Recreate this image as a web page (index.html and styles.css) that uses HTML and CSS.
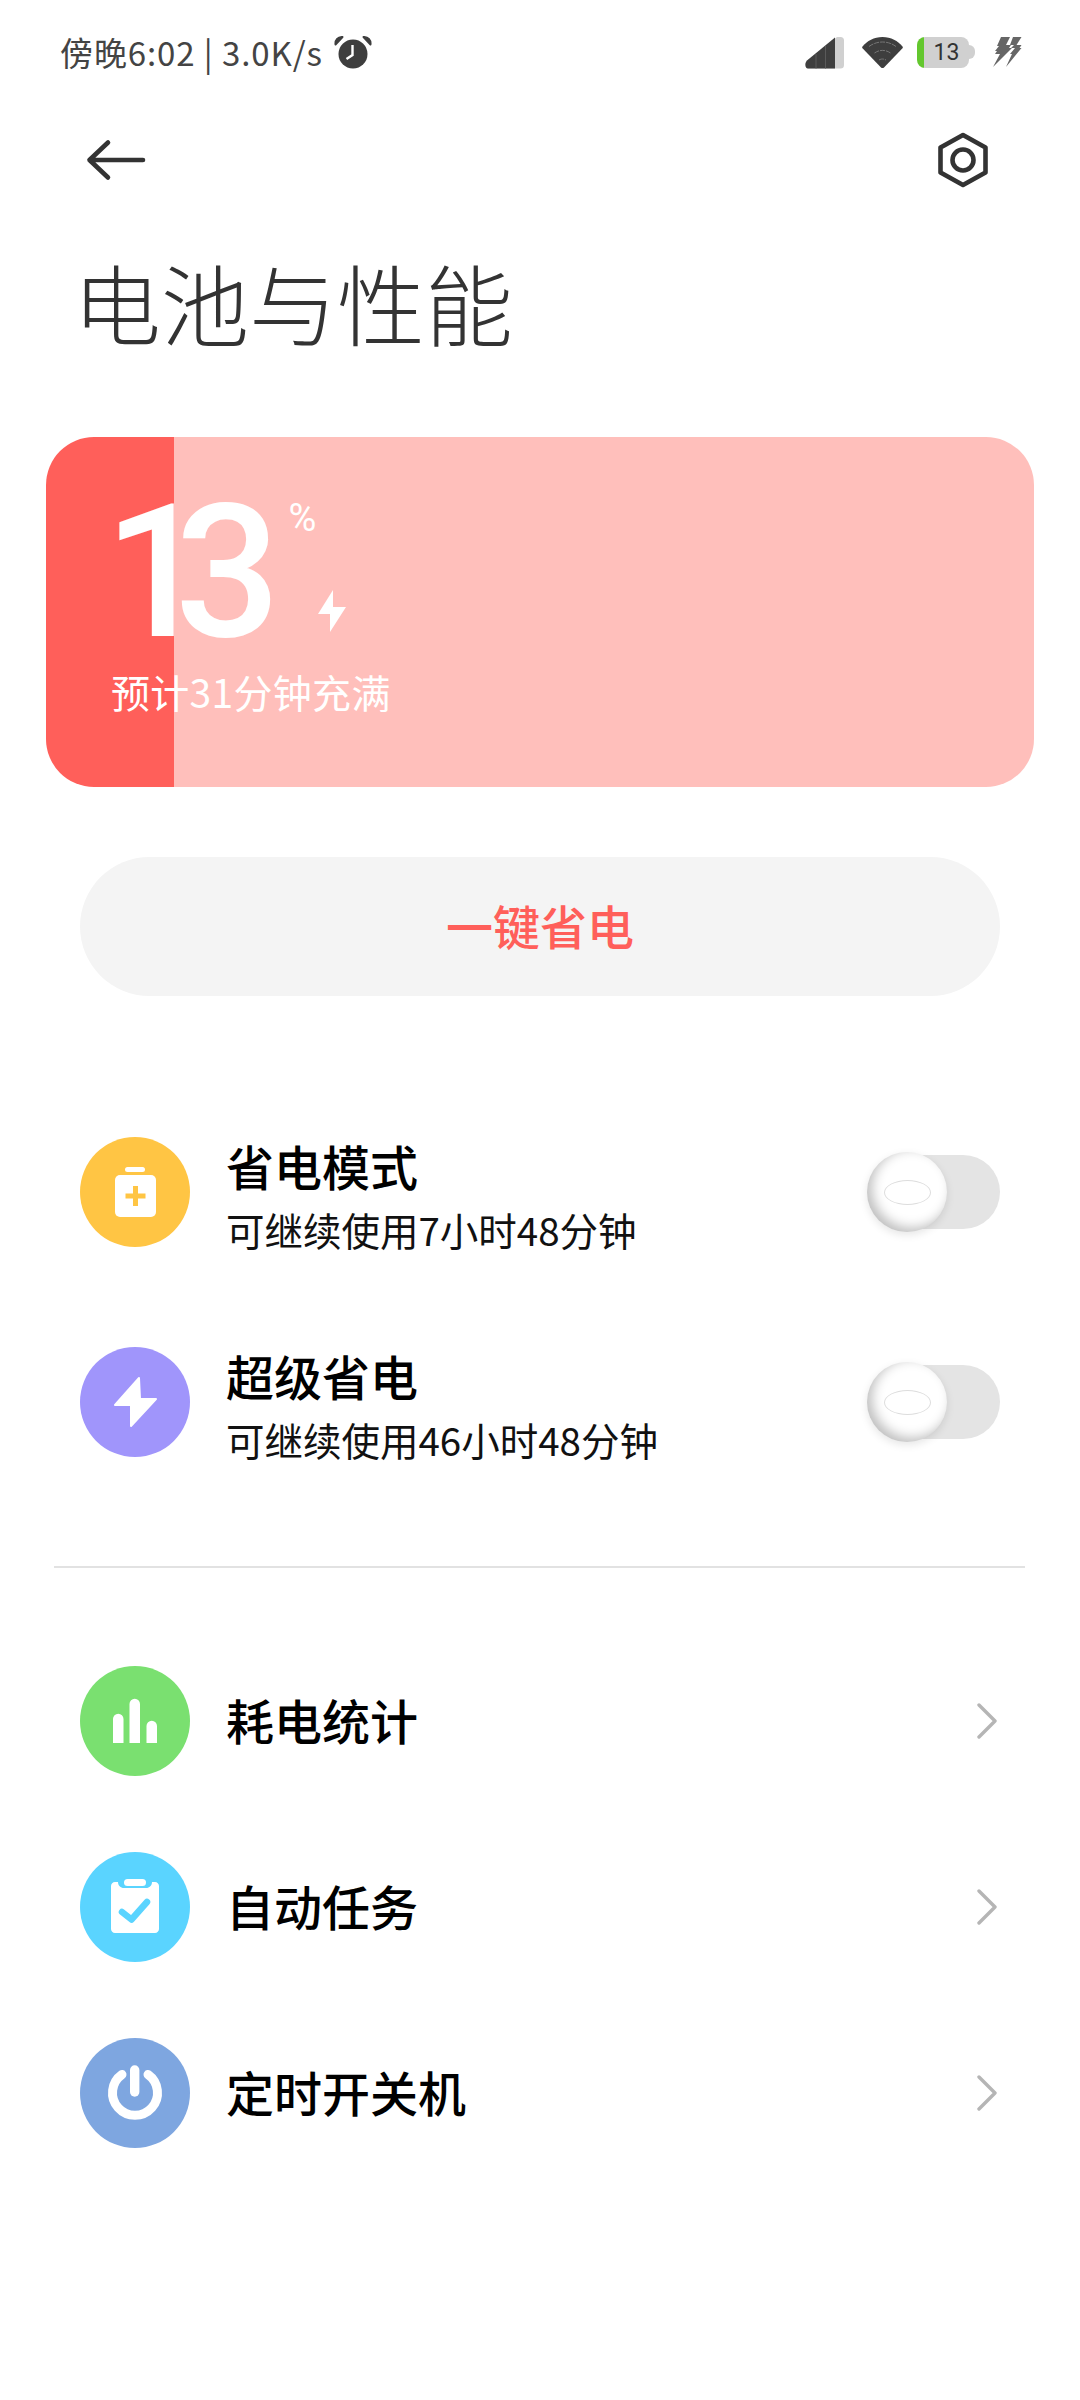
FILE: index.html
```html
<!DOCTYPE html>
<html lang="zh-CN">
<head>
    <meta charset="UTF-8">
    <meta name="viewport" content="width=device-width, initial-scale=1.0">
    <title>电池与性能</title>
    <link rel="stylesheet" href="styles.css">
</head>
<body>
    <div class="wrapper">
        <!-- 状态栏 -->
        <div class="status-bar">
            <span class="status-text">傍晚6:02 | 3.0K/s</span>
            <svg class="alarm" width="38" height="33" viewBox="0 0 38 33">
                <circle cx="19" cy="18" r="14.5" fill="#3e3e3e"/>
                <path d="M18.5 9v10l-6 4" fill="none" stroke="#fff" stroke-width="2.4"/>
                <path d="M1.5 8.5C1 4 4 .8 8.5 1L1.5 8.5zM36.5 8.5C37 4 34 .8 29.5 1l7 7.5z" fill="#3e3e3e" stroke="#3e3e3e" stroke-width="2" stroke-linejoin="round"/>
            </svg>
            <div class="status-icons">
                <svg width="40" height="33" viewBox="0 0 40 33">
                    <path d="M3 32.500h32.500a3.500 3.500 0 0 0 3.500-3.500V4.500A3.500 3.500 0 0 0 35.500 1H32L2 24.500c-2.500 2.500-2 8 1 8z" fill="#d0d0d0"/>
                    <path d="M3 32.500h27V1.500L2 24.500c-2.500 2.500-2 8 1 8z" fill="#3e3e3e"/>
                    <path d="M11 18v14.500M20.500 10v22.500" stroke="#5a5a5a" stroke-width="1"/>
                </svg>
                <svg class="wifi" width="43" height="33" viewBox="0 0 43 33">
                    <path d="M1.500 10.500C6 5 13 1 21.500 1S37 5 41.500 10.500c.5.700.4 1.300 0 1.800L23 31.500c-.8.800-2.200.8-3 0L1.500 12.300c-.4-.5-.5-1.100 0-1.800z" fill="#3e3e3e"/>
                    <path d="M8 10.500c8-6 19-6 27 0M13.500 17c5-3.500 11-3.500 16 0M18 24c2-1.300 5-1.300 7 0" fill="none" stroke="#777" stroke-width="1" stroke-dasharray="5 1"/>
                </svg>
                <div class="battery">
                    <div class="battery-body">13</div>
                    <div class="battery-nub"></div>
                </div>
                <svg class="flash" width="30" height="32" viewBox="0 0 30 32">
                    <path d="M9 1h9l-4 8h5l-2 3h3L1 31l7-13H3l2-3H3l4-5H5zM21 1h8.500l-5 8h5l-2 3h2L14 31l6-13h-2l5-6h-4l3-3h-4z" fill="#666"/>
                </svg>
            </div>
        </div>

        <!-- 顶部按钮 -->
        <div class="toolbar">
            <svg width="60" height="42" viewBox="0 0 60 42">
                <path d="M22 3.500L3.500 21 22 38.500M3.500 21H57" fill="none" stroke="#333" stroke-width="4.600" stroke-linecap="round" stroke-linejoin="round"/>
            </svg>
            <svg width="52" height="56" viewBox="0 0 52 56">
                <path d="M26 3l22.500 12.500v25L26 53 3.500 40.500v-25z" fill="none" stroke="#333" stroke-width="4.600" stroke-linejoin="round"/>
                <circle cx="26" cy="28" r="10.500" fill="none" stroke="#333" stroke-width="4.600"/>
            </svg>
        </div>

        <h1 class="title">电池与性能</h1>

        <!-- 电量卡片 -->
        <div class="card">
            <div class="level">
                <span class="level-num">13</span>
                <div class="level-side">
                    <span class="level-unit">%</span>
                    <svg width="28" height="42" viewBox="0 0 28 42">
                        <path d="M15 0L0 24h12v18l16-25H15z" fill="#fff"/>
                    </svg>
                </div>
            </div>
            <div class="card-sub">预计31分钟充满</div>
        </div>

        <div class="save-btn">一键省电</div>

        <!-- 省电模式 -->
        <div class="mode-list">
            <div class="row">
                <svg class="row-icon" width="110" height="110" viewBox="0 0 110 110">
                    <circle cx="55" cy="55" r="55" fill="#ffc544"/>
                    <rect x="45" y="30" width="20" height="5" rx="2.500" fill="#fff"/>
                    <rect x="35" y="38" width="41" height="42" rx="5" fill="#fff"/>
                    <path d="M55.500 49v20M45.500 59h20" stroke="#ffc544" stroke-width="5"/>
                </svg>
                <div class="row-text">
                    <div class="row-title">省电模式</div>
                    <div class="row-sub">可继续使用7小时48分钟</div>
                </div>
                <div class="toggle">
                    <div class="knob"><div class="knob-mark"></div></div>
                </div>
            </div>
            <div class="row">
                <svg class="row-icon" width="110" height="110" viewBox="0 0 110 110">
                    <circle cx="55" cy="55" r="55" fill="#a095fb"/>
                    <path d="M59 31L35 58h16v21l25-27H60z" fill="#fff" stroke="#fff" stroke-width="2" stroke-linejoin="round"/>
                </svg>
                <div class="row-text">
                    <div class="row-title">超级省电</div>
                    <div class="row-sub">可继续使用46小时48分钟</div>
                </div>
                <div class="toggle">
                    <div class="knob"><div class="knob-mark"></div></div>
                </div>
            </div>
        </div>

        <div class="divider"></div>

        <!-- 其他入口 -->
        <div class="nav-list">
            <div class="row">
                <svg class="row-icon" width="110" height="110" viewBox="0 0 110 110">
                    <circle cx="55" cy="55" r="55" fill="#7ae070"/>
                    <path d="M33 77V53a5 5 0 0 1 10.500 0v24zM49.500 77V38a5.200 5.200 0 0 1 10.500 0v39zM66.500 77V60a5 5 0 0 1 10.500 0v17z" fill="#fff"/>
                </svg>
                <div class="row-title row-grow">耗电统计</div>
                <svg width="20" height="36" viewBox="0 0 20 36">
                    <path d="M2 2l16 16L2 34" fill="none" stroke="#b5b5b5" stroke-width="3.400" stroke-linecap="round" stroke-linejoin="round"/>
                </svg>
            </div>
            <div class="row">
                <svg class="row-icon" width="110" height="110" viewBox="0 0 110 110">
                    <circle cx="55" cy="55" r="55" fill="#5ad4ff"/>
                    <path d="M35 30h3c0 3.500 2.500 6 6 6h22c3.500 0 6-2.500 6-6h3c2.200 0 4 1.800 4 4v43c0 2.200-1.800 4-4 4H35c-2.200 0-4-1.800-4-4V34c0-2.200 1.800-4 4-4z" fill="#fff"/>
                    <rect x="44" y="27" width="22" height="7" rx="3.500" fill="#fff"/>
                    <path d="M42 60l9.500 7.500L67 50" fill="none" stroke="#5ad4ff" stroke-width="6.500" stroke-linecap="round" stroke-linejoin="round"/>
                </svg>
                <div class="row-title row-grow">自动任务</div>
                <svg width="20" height="36" viewBox="0 0 20 36">
                    <path d="M2 2l16 16L2 34" fill="none" stroke="#b5b5b5" stroke-width="3.400" stroke-linecap="round" stroke-linejoin="round"/>
                </svg>
            </div>
            <div class="row">
                <svg class="row-icon" width="110" height="110" viewBox="0 0 110 110">
                    <circle cx="55" cy="55" r="55" fill="#7ea6e0"/>
                    <path d="M42 36.500a22.500 22.500 0 1 0 26 0" fill="none" stroke="#fff" stroke-width="9" stroke-linecap="round"/>
                    <path d="M54.700 32v22" stroke="#fff" stroke-width="9.400" stroke-linecap="round"/>
                </svg>
                <div class="row-title row-grow">定时开关机</div>
                <svg width="20" height="36" viewBox="0 0 20 36">
                    <path d="M2 2l16 16L2 34" fill="none" stroke="#b5b5b5" stroke-width="3.400" stroke-linecap="round" stroke-linejoin="round"/>
                </svg>
            </div>
        </div>
    </div>
</body>
</html>
```

FILE: styles.css
```css
*{
 box-sizing: border-box;
}
body{
 margin: 0;
 background-color: #fff;
 font-family: "Noto Sans CJK SC", "Noto Sans", sans-serif;
}
.wrapper{
 width: 1080px;
 height: 2400px;
 overflow: hidden;
}
.status-bar{
 height: 104px;
 padding: 0 58px 0 60px;
 display: flex;
 align-items: center;
}
.status-text{
 font-size: 33px;
 letter-spacing: 0.9px;
 color: #444;
 white-space: nowrap;
}
.alarm{
 margin-left: 11px;
}
.status-icons{
 margin-left: auto;
 display: flex;
 align-items: center;
}
.wifi{
 margin-left: 16px;
}
.battery{
 margin-left: 13px;
 display: flex;
 align-items: center;
}
.battery-body{
 width: 52px;
 height: 31px;
 border-radius: 8px;
 background: linear-gradient(to right, #63c72e 7px, #d0d0d0 7px);
 padding-left: 7px;
 color: #333;
 font-family: Roboto, sans-serif;
 font-size: 23px;
 line-height: 31px;
 text-align: center;
}
.battery-nub{
 width: 6px;
 height: 14px;
 border-radius: 0 6px 6px 0;
 background-color: #d0d0d0;
}
.flash{
 margin-left: 17px;
}
.toolbar{
 height: 112px;
 padding: 0 91px 0 86px;
 display: flex;
 align-items: center;
 justify-content: space-between;
}
.title{
 margin: 25px 0 0 73px;
 height: 127px;
 font-size: 88px;
 line-height: 120px;
 font-weight: 300;
 color: #333;
}
.card{
 margin: 69px 46px 0;
 height: 350px;
 border-radius: 48px;
 padding: 42px 0 0 58px;
 background: linear-gradient(to right, #ff5f5a 128px, #ffbfbb 128px);
 color: #fff;
}
.level{
 display: flex;
 height: 186px;
}
.level-num{
 font-family: Roboto, sans-serif;
 font-size: 186px;
 line-height: 186px;
 font-weight: 500;
 letter-spacing: -35px;
}
.level-side{
 margin-left: 43px;
 display: flex;
 flex-direction: column;
 align-items: flex-start;
}
.level-unit{
 font-family: Roboto, sans-serif;
 font-size: 38px;
 line-height: 40px;
 margin-top: 19px;
}
.level-side svg{
 margin: 52px 0 0 30px;
}
.card-sub{
 margin-left: 7px;
 font-size: 39px;
 letter-spacing: 0.3px;
 line-height: 52px;
}
.save-btn{
 margin: 70px 80px 0;
 height: 139px;
 padding-bottom: 5px;
 border-radius: 70px;
 background-color: #f4f4f4;
 color: #ff5f5a;
 font-size: 47px;
 font-weight: 500;
 display: flex;
 align-items: center;
 justify-content: center;
}
.mode-list{
 margin: 141px 80px 0;
 display: flex;
 flex-direction: column;
 gap: 100px;
}
.nav-list{
 margin: 98px 83px 0 80px;
 display: flex;
 flex-direction: column;
 gap: 76px;
}
.row{
 display: flex;
 align-items: center;
 height: 110px;
}
.row-icon{
 flex-shrink: 0;
 margin-right: 36px;
}
.row-text{
 flex: 1;
 padding-top: 4px;
}
.row-grow{
 flex: 1;
 padding-bottom: 4px;
}
.row-title{
 font-size: 48px;
 line-height: 62px;
 font-weight: 500;
 color: #000;
}
.row-sub{
 margin-top: 8px;
 font-size: 38.5px;
 line-height: 50px;
 color: #111;
}
.toggle{
 width: 131px;
 height: 74px;
 border-radius: 37px;
 background-color: #e4e4e4;
 display: flex;
 align-items: center;
}
.knob{
 width: 80px;
 height: 80px;
 flex-shrink: 0;
 margin-left: -2px;
 border-radius: 50%;
 background-color: #fff;
 box-shadow: inset 5px -4px 12px rgba(0,0,0,0.25), 0 3px 8px rgba(0,0,0,0.1);
 display: flex;
 align-items: center;
 justify-content: center;
}
.knob-mark{
 width: 47px;
 height: 25px;
 border: 1px solid #ddd;
 border-radius: 50%;
}
.divider{
 margin: 109px 55px 0 54px;
 height: 2px;
 background-color: #e2e2e2;
}
```
